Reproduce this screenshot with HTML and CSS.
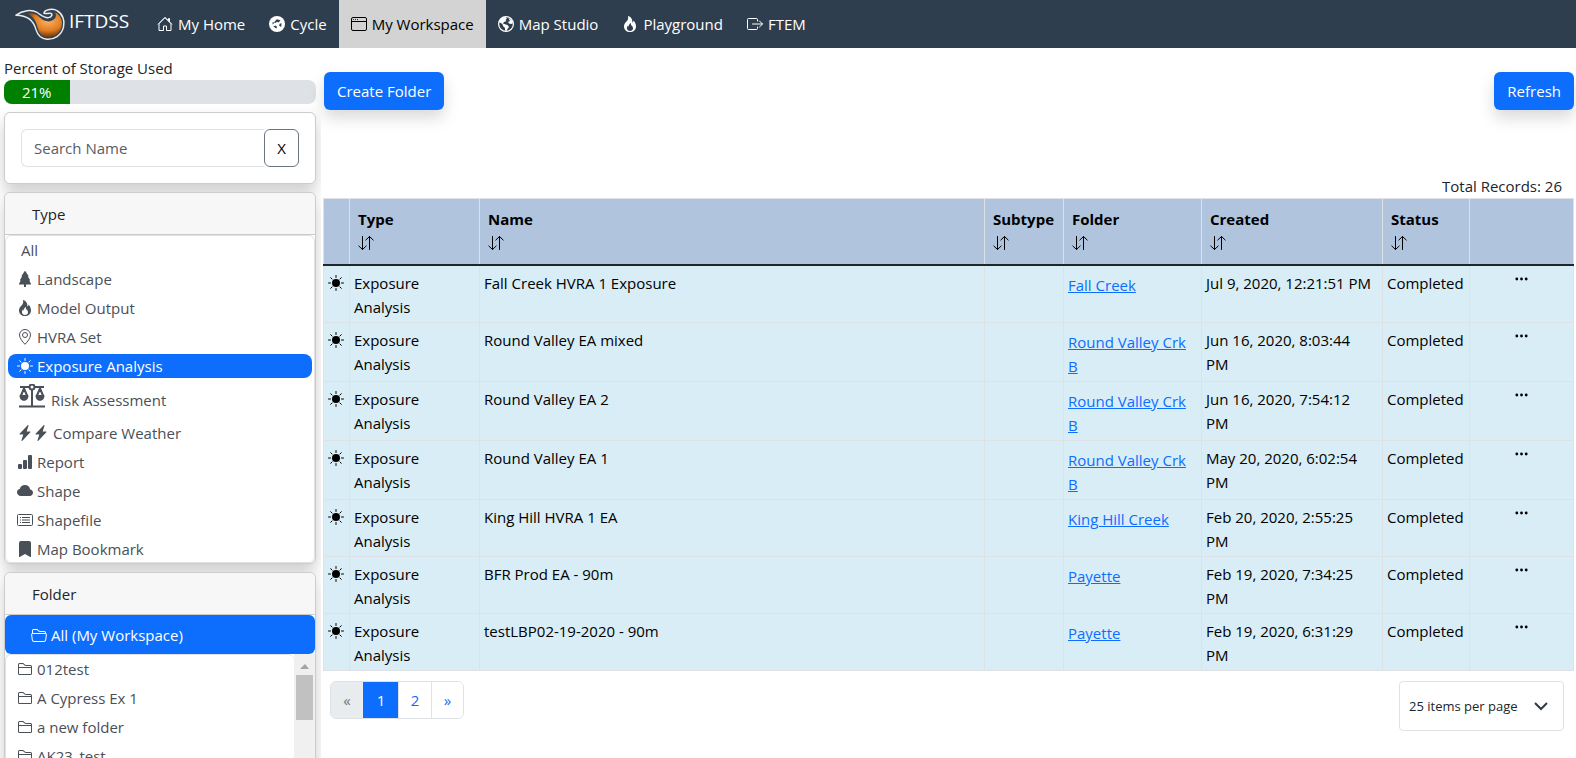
FILE: index.html
```html
<!DOCTYPE html>
<html lang="en">
<head>
    <meta charset="UTF-8">
    <meta name="viewport" content="width=device-width, initial-scale=1.0">
    <title>IFTDSS - My Workspace</title>
    <link rel="stylesheet" href="styles.css">
</head>
<body>
    <!-- icon set -->
    <svg class="sprite" aria-hidden="true">
        <symbol id="house" viewBox="0 0 16 16"><path fill="none" stroke="currentColor" d="M2 14.500V7.500L8 1.500l6 6v7H9.500v-4.500h-3v4.500zM1 8.500l7-7 7 7M12.500 5.500V2.500h-1v2"/></symbol>
        <symbol id="cycle" viewBox="0 0 16 16"><circle cx="8" cy="8" r="8"/><path fill="#2f3e4e" d="M7.800 3.300 11.500 4.300 9.500 6.500 8 5.800 6.500 7 5 6.500zM12.600 7.200l-.4 3.800-2-1.200.4-2zM7.500 12.500l-3.200-2 2.200-.9 1.500 1.100zM3.500 8.500l.2-2.700 1.600 1.300z"/></symbol>
        <symbol id="window" viewBox="0 0 16 16"><path fill="none" stroke="currentColor" d="M2 1.500h12A1.500 1.500 0 0 1 15.500 3v10a1.500 1.500 0 0 1-1.500 1.500H2A1.500 1.500 0 0 1 .5 13V3A1.500 1.500 0 0 1 2 1.500zM.5 5.500h15"/><circle cx="2.500" cy="3.500" r=".5"/><circle cx="4.500" cy="3.500" r=".5"/><circle cx="6.500" cy="3.500" r=".5"/></symbol>
        <symbol id="globe" viewBox="0 0 16 16"><circle cx="8" cy="8" r="7.400" fill="none" stroke="currentColor" stroke-width="1.200"/><path d="M1 6 3 2.500 7 .8l2 1.400L7.500 4l1 1-2.500 1-1 1.500 2 .8 2.500.7 1.500 2-1.500 2L8.500 15 7 14.500V12L5 10 4.500 8zM10.500 2l3 2 1.500 3-1.500 1-2.500-.5L10 6l2-1z"/></symbol>
        <symbol id="fire" viewBox="0 0 16 16"><path d="M8 16c3.314 0 6-2 6-5.500 0-1.500-.5-4-2.500-6 .25 1.500-1.250 2-1.250 2C11 4 9 .5 6 0c.357 2 .5 4-2 6-1.250 1-2 2.729-2 4.500C2 14 4.686 16 8 16m0-1c-1.657 0-3-1-3-2.750 0-.75.25-2 1.250-3C6.125 10 7 10.500 7 10.500c-.375-1.250.5-3.250 2-3.500-.179 1-.25 2 1 3 .625.5 1 1.364 1 2.250C11 14 9.657 15 8 15"/></symbol>
        <symbol id="exit" viewBox="0 0 16 16"><path fill="none" stroke="currentColor" stroke-linecap="round" stroke-linejoin="round" d="M10.500 5V3.500a1 1 0 0 0-1-1h-8a1 1 0 0 0-1 1v9a1 1 0 0 0 1 1h8a1 1 0 0 0 1-1V11M5.500 8h10M12.500 5l3 3-3 3"/></symbol>
        <symbol id="tree" viewBox="0 0 16 16"><path d="M8.416.223a.5.5 0 0 0-.832 0l-3 4.500A.5.5 0 0 0 5 5.500h.098L3.076 8.735A.5.5 0 0 0 3.500 9.500h.191l-1.638 3.276a.5.5 0 0 0 .447.724H7V16h2v-2.500h4.500a.5.5 0 0 0 .447-.724L12.310 9.500h.191a.5.5 0 0 0 .424-.765L10.902 5.500H11a.5.5 0 0 0 .416-.777z"/></symbol>
        <symbol id="pin" viewBox="0 0 16 16"><path fill="none" stroke="currentColor" d="M8 15.300C5.500 12.700 2.500 9 2.500 6a5.500 5.500 0 0 1 11 0c0 3-3 6.700-5.500 9.300z"/><circle cx="8" cy="6" r="2.500" fill="none" stroke="currentColor"/></symbol>
        <symbol id="sun" viewBox="0 0 16 16"><circle cx="8" cy="8" r="4"/><path fill="none" stroke="currentColor" stroke-linecap="round" d="M8 .5v2M8 13.500v2M.5 8h2M13.500 8h2M2.700 2.700l1.400 1.400M11.900 11.900l1.400 1.400M2.700 13.300l1.400-1.400M11.900 4.100l1.400-1.400"/></symbol>
        <symbol id="scales" viewBox="0 0 26 24"><path fill="none" stroke="currentColor" stroke-width="2" d="M1 3h9M16 3h9M13 6v16M0 22.500h26"/><circle cx="13" cy="3" r="2.500" fill="none" stroke="currentColor" stroke-width="2"/><path fill="none" stroke="currentColor" stroke-width="2" stroke-linejoin="round" d="M5 4.500 1.800 12h6.400zM21 4.500 17.800 12h6.400z"/><path d="M.5 11.500h9c0 7-9 7-9 0zM16.500 11.500h9c0 7-9 7-9 0z"/></symbol>
        <symbol id="bolt" viewBox="0 0 16 16"><path d="M11.251.068a.5.5 0 0 1 .227.58L9.677 6.500H13a.5.5 0 0 1 .364.843l-8 8.500a.5.5 0 0 1-.842-.49L6.323 9.500H3a.5.5 0 0 1-.364-.843l8-8.500a.5.5 0 0 1 .615-.09z"/></symbol>
        <symbol id="bars" viewBox="0 0 16 16"><rect x="1" y="10" width="4" height="5" rx="1"/><rect x="6" y="6" width="4" height="9" rx="1"/><rect x="11" y="1" width="4" height="14" rx="1"/></symbol>
        <symbol id="cloud" viewBox="0 0 16 16"><path d="M4.406 3.342A5.530 5.530 0 0 1 8 2c2.690 0 4.923 2 5.166 4.579C14.758 6.804 16 8.137 16 9.773 16 11.569 14.502 13 12.687 13H3.781C1.708 13 0 11.366 0 9.318c0-1.763 1.266-3.223 2.942-3.593.143-.863.698-1.723 1.464-2.383"/></symbol>
        <symbol id="list" viewBox="0 0 16 16"><rect x=".5" y="2.500" width="15" height="11" rx="1" fill="none" stroke="currentColor"/><path fill="none" stroke="currentColor" d="M5 5.500h8M5 8h8M5 10.500h8M3 5.500h1M3 8h1M3 10.500h1"/></symbol>
        <symbol id="bookmark" viewBox="0 0 16 16"><path d="M2 2v13.500a.5.5 0 0 0 .74.439L8 13.069l5.260 2.870A.5.5 0 0 0 14 15.500V2a2 2 0 0 0-2-2H4a2 2 0 0 0-2 2"/></symbol>
        <symbol id="folder" viewBox="0 0 16 16"><path d="M1 3.500A1.500 1.500 0 0 1 2.500 2h2.764c.958 0 1.760.56 2.311 1.184C7.985 3.648 8.480 4 9 4h4.500A1.500 1.500 0 0 1 15 5.500v7a1.500 1.500 0 0 1-1.500 1.500h-11A1.500 1.500 0 0 1 1 12.500zM2.500 3a.5.5 0 0 0-.5.5V6h12v-.5a.5.5 0 0 0-.5-.5H9c-.964 0-1.710-.629-2.174-1.154C6.374 3.334 5.820 3 5.264 3zM14 7H2v5.500a.5.5 0 0 0 .5.5h11a.5.5 0 0 0 .5-.5z"/></symbol>
        <symbol id="folder-open" viewBox="0 0 16 16"><path d="M1 3.500A1.500 1.500 0 0 1 2.500 2h2.764c.958 0 1.760.56 2.311 1.184C7.985 3.648 8.480 4 9 4h4.500A1.500 1.500 0 0 1 15 5.500v.64c.57.265.94.876.856 1.546l-.64 5.124A2.500 2.500 0 0 1 12.733 15H3.266a2.500 2.500 0 0 1-2.481-2.190l-.64-5.124A1.500 1.500 0 0 1 1 6.140zM2 6h12v-.5a.5.5 0 0 0-.5-.5H9c-.964 0-1.710-.629-2.174-1.154C6.374 3.334 5.820 3 5.264 3H2.500a.5.5 0 0 0-.5.5zm-.367 1a.5.5 0 0 0-.496.562l.64 5.124A1.500 1.500 0 0 0 3.266 14h9.468a1.500 1.500 0 0 0 1.489-1.314l.64-5.124A.5.5 0 0 0 14.367 7z"/></symbol>
        <symbol id="sort" viewBox="0 0 16 16"><path fill="none" stroke="currentColor" stroke-linecap="round" stroke-linejoin="round" d="M4.500 1.500v13M.8 11l3.700 3.500L8.200 11M11.500 14.500v-13M7.800 5l3.700-3.500L15.200 5"/></symbol>
        <symbol id="dots" viewBox="0 0 16 16"><circle cx="3" cy="8" r="1.500"/><circle cx="8" cy="8" r="1.500"/><circle cx="13" cy="8" r="1.500"/></symbol>
    </svg>

    <nav class="navbar">
        <a class="brand" href="#">
            <svg class="logo" viewBox="0 0 52 34">
                <defs>
                    <radialGradient id="flame" cx=".6" cy=".35" r=".65">
                        <stop offset="0" stop-color="#ffb163"/>
                        <stop offset=".6" stop-color="#df7d22"/>
                        <stop offset="1" stop-color="#6a350c"/>
                    </radialGradient>
                </defs>
                <path fill="#33414f" stroke="#e8ecef" stroke-width="1.500" stroke-linejoin="round" d="M1 8C8 3 17 2 22 5c5 3 8 6 12 5.500C38 10 39 6 35.500 6 33 6 32 7 29.500 6 30 2 39 .5 43 3.500 49 7 51 14 49.500 20c-2 9-10 13-17 12.500C26 32 23 28 21.500 23 19.500 15 15 8 1 8z"/>
                <path fill="url(#flame)" d="M12 6c7-1 11 2 14 5 4 4 11 5 15 0 1-2 1-4 0-6 5 3 8 8 6.500 14.500C46 27 39 31 32.500 30.500 27 30 25 26 23.500 22 22 15 19 9 12 6z"/>
            </svg>
            <span>IFTDSS</span>
        </a>
        <a class="nav-link" href="#"><svg class="icon"><use href="#house"/></svg>My Home</a>
        <a class="nav-link" href="#"><svg class="icon"><use href="#cycle"/></svg>Cycle</a>
        <a class="nav-link active" href="#"><svg class="icon"><use href="#window"/></svg>My Workspace</a>
        <a class="nav-link" href="#"><svg class="icon"><use href="#globe"/></svg>Map Studio</a>
        <a class="nav-link" href="#"><svg class="icon"><use href="#fire"/></svg>Playground</a>
        <a class="nav-link" href="#"><svg class="icon"><use href="#exit"/></svg>FTEM</a>
    </nav>

    <div class="layout">
        <aside class="sidebar">
            <div class="storage">
                <div class="storage-label">Percent of Storage Used</div>
                <div class="progress">
                    <div class="progress-bar" style="width: 21%">21%</div>
                </div>
            </div>

            <form class="card search">
                <input class="search-input" type="text" placeholder="Search Name" aria-label="Search Name">
                <button class="search-clear" type="button">X</button>
            </form>

            <section class="card">
                <h2 class="card-header">Type</h2>
                <div class="list">
                    <a class="item item-all" href="#">All</a>
                    <a class="item" href="#"><svg class="icon"><use href="#tree"/></svg>Landscape</a>
                    <a class="item" href="#"><svg class="icon"><use href="#fire"/></svg>Model Output</a>
                    <a class="item" href="#"><svg class="icon"><use href="#pin"/></svg>HVRA Set</a>
                    <a class="item active" href="#"><svg class="icon"><use href="#sun"/></svg>Exposure Analysis</a>
                    <a class="item item-tall" href="#"><svg class="icon-scales"><use href="#scales"/></svg>Risk Assessment</a>
                    <a class="item" href="#"><span class="bolts"><svg class="icon"><use href="#bolt"/></svg><svg class="icon"><use href="#bolt"/></svg></span>Compare Weather</a>
                    <a class="item" href="#"><svg class="icon"><use href="#bars"/></svg>Report</a>
                    <a class="item" href="#"><svg class="icon"><use href="#cloud"/></svg>Shape</a>
                    <a class="item" href="#"><svg class="icon"><use href="#list"/></svg>Shapefile</a>
                    <a class="item" href="#"><svg class="icon"><use href="#bookmark"/></svg>Map Bookmark</a>
                </div>
            </section>

            <section class="card">
                <h2 class="card-header">Folder</h2>
                <a class="folder-all" href="#"><svg class="icon"><use href="#folder-open"/></svg>All (My Workspace)</a>
                <div class="folders">
                    <div class="list folder-list">
                        <a class="item" href="#"><svg class="icon"><use href="#folder"/></svg>012test</a>
                        <a class="item" href="#"><svg class="icon"><use href="#folder"/></svg>A Cypress Ex 1</a>
                        <a class="item" href="#"><svg class="icon"><use href="#folder"/></svg>a new folder</a>
                        <a class="item" href="#"><svg class="icon"><use href="#folder"/></svg>AK23_test</a>
                    </div>
                    <div class="scrollbar">
                        <div class="scroll-up"></div>
                        <div class="scroll-thumb"></div>
                    </div>
                </div>
            </section>
        </aside>

        <main class="main">
            <div class="toolbar">
                <button class="btn">Create Folder</button>
                <button class="btn">Refresh</button>
            </div>
            <div class="total">Total Records: 26</div>

            <table class="records">
                <colgroup>
                    <col class="col-icon">
                    <col class="col-type">
                    <col>
                    <col class="col-subtype">
                    <col class="col-folder">
                    <col class="col-created">
                    <col class="col-status">
                    <col class="col-menu">
                </colgroup>
                <thead>
                    <tr>
                        <th></th>
                        <th>Type<svg class="sort"><use href="#sort"/></svg></th>
                        <th>Name<svg class="sort"><use href="#sort"/></svg></th>
                        <th>Subtype<svg class="sort"><use href="#sort"/></svg></th>
                        <th>Folder<svg class="sort"><use href="#sort"/></svg></th>
                        <th>Created<svg class="sort"><use href="#sort"/></svg></th>
                        <th>Status<svg class="sort"><use href="#sort"/></svg></th>
                        <th></th>
                    </tr>
                </thead>
                <tbody>
                    <tr>
                        <td class="cell-icon"><svg class="icon"><use href="#sun"/></svg></td>
                        <td>Exposure Analysis</td>
                        <td>Fall Creek HVRA 1 Exposure</td>
                        <td></td>
                        <td><a class="folder-link" href="#">Fall Creek</a></td>
                        <td class="cell-created">Jul 9, 2020, 12:21:51 PM</td>
                        <td>Completed</td>
                        <td class="cell-menu"><button class="menu" aria-label="Actions"><svg class="icon"><use href="#dots"/></svg></button></td>
                    </tr>
                    <tr>
                        <td class="cell-icon"><svg class="icon"><use href="#sun"/></svg></td>
                        <td>Exposure Analysis</td>
                        <td>Round Valley EA mixed</td>
                        <td></td>
                        <td><a class="folder-link" href="#">Round Valley Crk B</a></td>
                        <td class="cell-created">Jun 16, 2020, 8:03:44 PM</td>
                        <td>Completed</td>
                        <td class="cell-menu"><button class="menu" aria-label="Actions"><svg class="icon"><use href="#dots"/></svg></button></td>
                    </tr>
                    <tr>
                        <td class="cell-icon"><svg class="icon"><use href="#sun"/></svg></td>
                        <td>Exposure Analysis</td>
                        <td>Round Valley EA 2</td>
                        <td></td>
                        <td><a class="folder-link" href="#">Round Valley Crk B</a></td>
                        <td class="cell-created">Jun 16, 2020, 7:54:12 PM</td>
                        <td>Completed</td>
                        <td class="cell-menu"><button class="menu" aria-label="Actions"><svg class="icon"><use href="#dots"/></svg></button></td>
                    </tr>
                    <tr>
                        <td class="cell-icon"><svg class="icon"><use href="#sun"/></svg></td>
                        <td>Exposure Analysis</td>
                        <td>Round Valley EA 1</td>
                        <td></td>
                        <td><a class="folder-link" href="#">Round Valley Crk B</a></td>
                        <td class="cell-created">May 20, 2020, 6:02:54 PM</td>
                        <td>Completed</td>
                        <td class="cell-menu"><button class="menu" aria-label="Actions"><svg class="icon"><use href="#dots"/></svg></button></td>
                    </tr>
                    <tr>
                        <td class="cell-icon"><svg class="icon"><use href="#sun"/></svg></td>
                        <td>Exposure Analysis</td>
                        <td>King Hill HVRA 1 EA</td>
                        <td></td>
                        <td><a class="folder-link" href="#">King Hill Creek</a></td>
                        <td class="cell-created">Feb 20, 2020, 2:55:25 PM</td>
                        <td>Completed</td>
                        <td class="cell-menu"><button class="menu" aria-label="Actions"><svg class="icon"><use href="#dots"/></svg></button></td>
                    </tr>
                    <tr>
                        <td class="cell-icon"><svg class="icon"><use href="#sun"/></svg></td>
                        <td>Exposure Analysis</td>
                        <td>BFR Prod EA - 90m</td>
                        <td></td>
                        <td><a class="folder-link" href="#">Payette</a></td>
                        <td class="cell-created">Feb 19, 2020, 7:34:25 PM</td>
                        <td>Completed</td>
                        <td class="cell-menu"><button class="menu" aria-label="Actions"><svg class="icon"><use href="#dots"/></svg></button></td>
                    </tr>
                    <tr>
                        <td class="cell-icon"><svg class="icon"><use href="#sun"/></svg></td>
                        <td>Exposure Analysis</td>
                        <td>testLBP02-19-2020 - 90m</td>
                        <td></td>
                        <td><a class="folder-link" href="#">Payette</a></td>
                        <td class="cell-created">Feb 19, 2020, 6:31:29 PM</td>
                        <td>Completed</td>
                        <td class="cell-menu"><button class="menu" aria-label="Actions"><svg class="icon"><use href="#dots"/></svg></button></td>
                    </tr>
                </tbody>
            </table>

            <div class="footer">
                <div class="pagination">
                    <button class="page page-arrow" disabled aria-label="Previous">«</button>
                    <a class="page active" href="#">1</a>
                    <a class="page" href="#">2</a>
                    <a class="page page-arrow" href="#" aria-label="Next">»</a>
                </div>
                <div class="page-size">
                    <select class="page-select" aria-label="Items per page">
                        <option>25 items per page</option>
                        <option>50 items per page</option>
                    </select>
                    <svg class="chevron" viewBox="0 0 16 16"><path d="m2 5 6 6 6-6"/></svg>
                </div>
            </div>
        </main>
    </div>
</body>
</html>
```
FILE: styles.css
```css
*{
    box-sizing: border-box;
}
body{
    margin: 0;
    height: 100vh;
    display: flex;
    flex-direction: column;
    overflow: hidden;
    font-family: "Open Sans", "Noto Sans", sans-serif;
    font-size: 15px;
    line-height: 24px;
    color: #212529;
    background: #fff;
}
button, input, select{
    font: inherit;
}
a{
    text-decoration: none;
}
.sprite{
    display: none;
}
.icon{
    width: 16px;
    height: 16px;
    flex: none;
    fill: currentColor;
}

/* top bar */
.navbar{
    display: flex;
    flex: none;
    height: 48px;
    background: #2f3e4e;
}
.brand{
    display: flex;
    gap: 3px;
    width: 145px;
    padding: 7px 0 0 15px;
    color: #fff;
    font-size: 19px;
    line-height: 28px;
}
.logo{
    width: 51px;
    height: 34px;
}
.nav-link{
    display: flex;
    align-items: center;
    gap: 5px;
    padding: 0 12px;
    color: #fff;
}
.nav-link.active{
    background: #d3d3d3;
    color: #000;
}

.layout{
    display: flex;
    flex: 1;
    min-height: 0;
}

/* left column */
.sidebar{
    display: flex;
    flex-direction: column;
    gap: 8px;
    width: 321px;
    padding: 8px 5px 0 4px;
    overflow: hidden;
}
.progress{
    height: 24px;
    border-radius: 8px;
    overflow: hidden;
    background: #dee2e6;
}
.progress-bar{
    background: green;
    color: #fff;
    text-align: center;
}
.card{
    flex: none;
    border: 1px solid #ccc;
    border-radius: 6px;
    background: #fff;
    box-shadow: 0 8px 16px rgba(0, 0, 0, .2);
}
.search{
    display: flex;
    padding: 16px;
}
.search-input{
    flex: 1;
    min-width: 0;
    height: 38px;
    padding: 0 12px;
    border: 1px solid #dee2e6;
    border-right: 0;
    border-radius: 6px 0 0 6px;
    background: #fff;
}
.search-input::placeholder{
    color: #595c5f;
}
.search-clear{
    width: 35px;
    border: 1px solid #6c757d;
    border-radius: 6px;
    background: #fff;
    color: #000;
}
.card-header{
    margin: 0;
    padding: 9px 27px 8px;
    border-bottom: 1px solid #ccc;
    border-radius: 6px 6px 0 0;
    background: #f7f7f7;
    font-size: 15px;
    font-weight: 400;
}
.list{
    display: flex;
    flex-direction: column;
    gap: 5px;
    padding: 2px 2px 1px;
    border: 1px solid #e1e1e1;
    border-radius: 6px;
    color: #495057;
}
.item{
    display: flex;
    align-items: center;
    gap: 4px;
    height: 24px;
    padding: 0 9px;
    border-radius: 8px;
    color: inherit;
}
.item-all{
    padding-left: 13px;
}
.item.active{
    background: #0d6efd;
    color: #fff;
}
.item-tall{
    height: 33px;
    gap: 6px;
    padding-left: 11px;
}
.icon-scales{
    width: 26px;
    height: 24px;
    margin-bottom: 8px;
    fill: currentColor;
    overflow: visible;
}
.bolts{
    display: flex;
}
.folder-all{
    display: flex;
    align-items: center;
    gap: 4px;
    height: 39px;
    padding: 0 26px;
    border-radius: 6px;
    background: #0d6efd;
    color: #fff;
}
.folders{
    display: flex;
}
.folder-list{
    flex: 1;
    border-right: 0;
}
.scrollbar{
    width: 21px;
    padding: 0 2px;
    background: #f0f0f0;
}
.scroll-up{
    height: 21px;
    background: #a3a3a3;
    clip-path: polygon(4px 15px, 13px 15px, 9px 10px);
}
.scroll-thumb{
    height: 45px;
    background: #c1c1c1;
}

/* workspace */
.main{
    flex: 1;
    min-width: 0;
    padding: 24px 2px 0;
}
.toolbar{
    display: flex;
    justify-content: space-between;
    padding-left: 1px;
    margin-bottom: 64px;
}
.btn{
    height: 38px;
    padding: 0 13px;
    border: 0;
    border-radius: 6px;
    background: #0d6efd;
    color: #fff;
    box-shadow: 0 8px 16px rgba(0, 0, 0, .15);
}
.total{
    padding-right: 12px;
    text-align: right;
}
.records{
    width: 100%;
    table-layout: fixed;
    border-collapse: collapse;
    color: #000;
}
.col-icon{
    width: 26px;
}
.col-type{
    width: 130px;
}
.col-subtype{
    width: 79px;
}
.col-folder{
    width: 138px;
}
.col-created{
    width: 181px;
}
.col-status{
    width: 87px;
}
.col-menu{
    width: 104px;
}
.records th{
    height: 66px;
    padding: 8px;
    border: 1px solid #dee2e6;
    border-bottom: 2px solid #212529;
    background: #b0c4de;
    font-weight: 700;
    text-align: left;
    vertical-align: top;
}
.sort{
    display: block;
    width: 16px;
    height: 16px;
    margin-top: 4px;
}
.records td{
    padding: 5px 4px 3px;
    border: 1px solid #dee2e6;
    background: #d9edf6;
    vertical-align: top;
}
.records .cell-icon .icon{
    display: block;
    margin-top: 4px;
}
.records .cell-created{
    padding-right: 8px;
}
.records .cell-menu{
    padding: 3px 4px;
    text-align: center;
}
.folder-link{
    display: block;
    padding-top: 2px;
    color: #0d6efd;
    text-decoration: underline;
}
.menu{
    display: inline-flex;
    padding: 2px;
    border: 0;
    background: none;
    color: #000;
}
.menu .icon{
    width: 15px;
}

.footer{
    display: flex;
    justify-content: space-between;
    align-items: flex-start;
    padding: 10px 10px 0 7px;
}
.pagination{
    display: flex;
    height: 38px;
    border: 1px solid #dee2e6;
    border-radius: 6px;
    overflow: hidden;
}
.page{
    width: 33px;
    padding: 0;
    border: 0;
    border-left: 1px solid #dee2e6;
    background: #fff;
    color: #0d6efd;
    line-height: 36px;
    text-align: center;
}
.page-arrow{
    width: 32px;
}
.page:first-child{
    border-left: 0;
}
.page.active{
    width: 35px;
    background: #0d6efd;
    border-color: #0d6efd;
    color: #fff;
}
.page:disabled{
    background: #e9ecef;
    color: #6c757d;
}
.page-size{
    position: relative;
}
.page-select{
    width: 165px;
    height: 50px;
    padding: 0 36px 0 9px;
    border: 1px solid #dee2e6;
    border-radius: 4px;
    background: #fff;
    color: #212529;
    font-size: 13px;
    appearance: none;
}
.chevron{
    position: absolute;
    top: 17px;
    right: 15px;
    width: 16px;
    height: 16px;
    fill: none;
    stroke: #343a40;
    stroke-width: 2;
    pointer-events: none;
}
```
